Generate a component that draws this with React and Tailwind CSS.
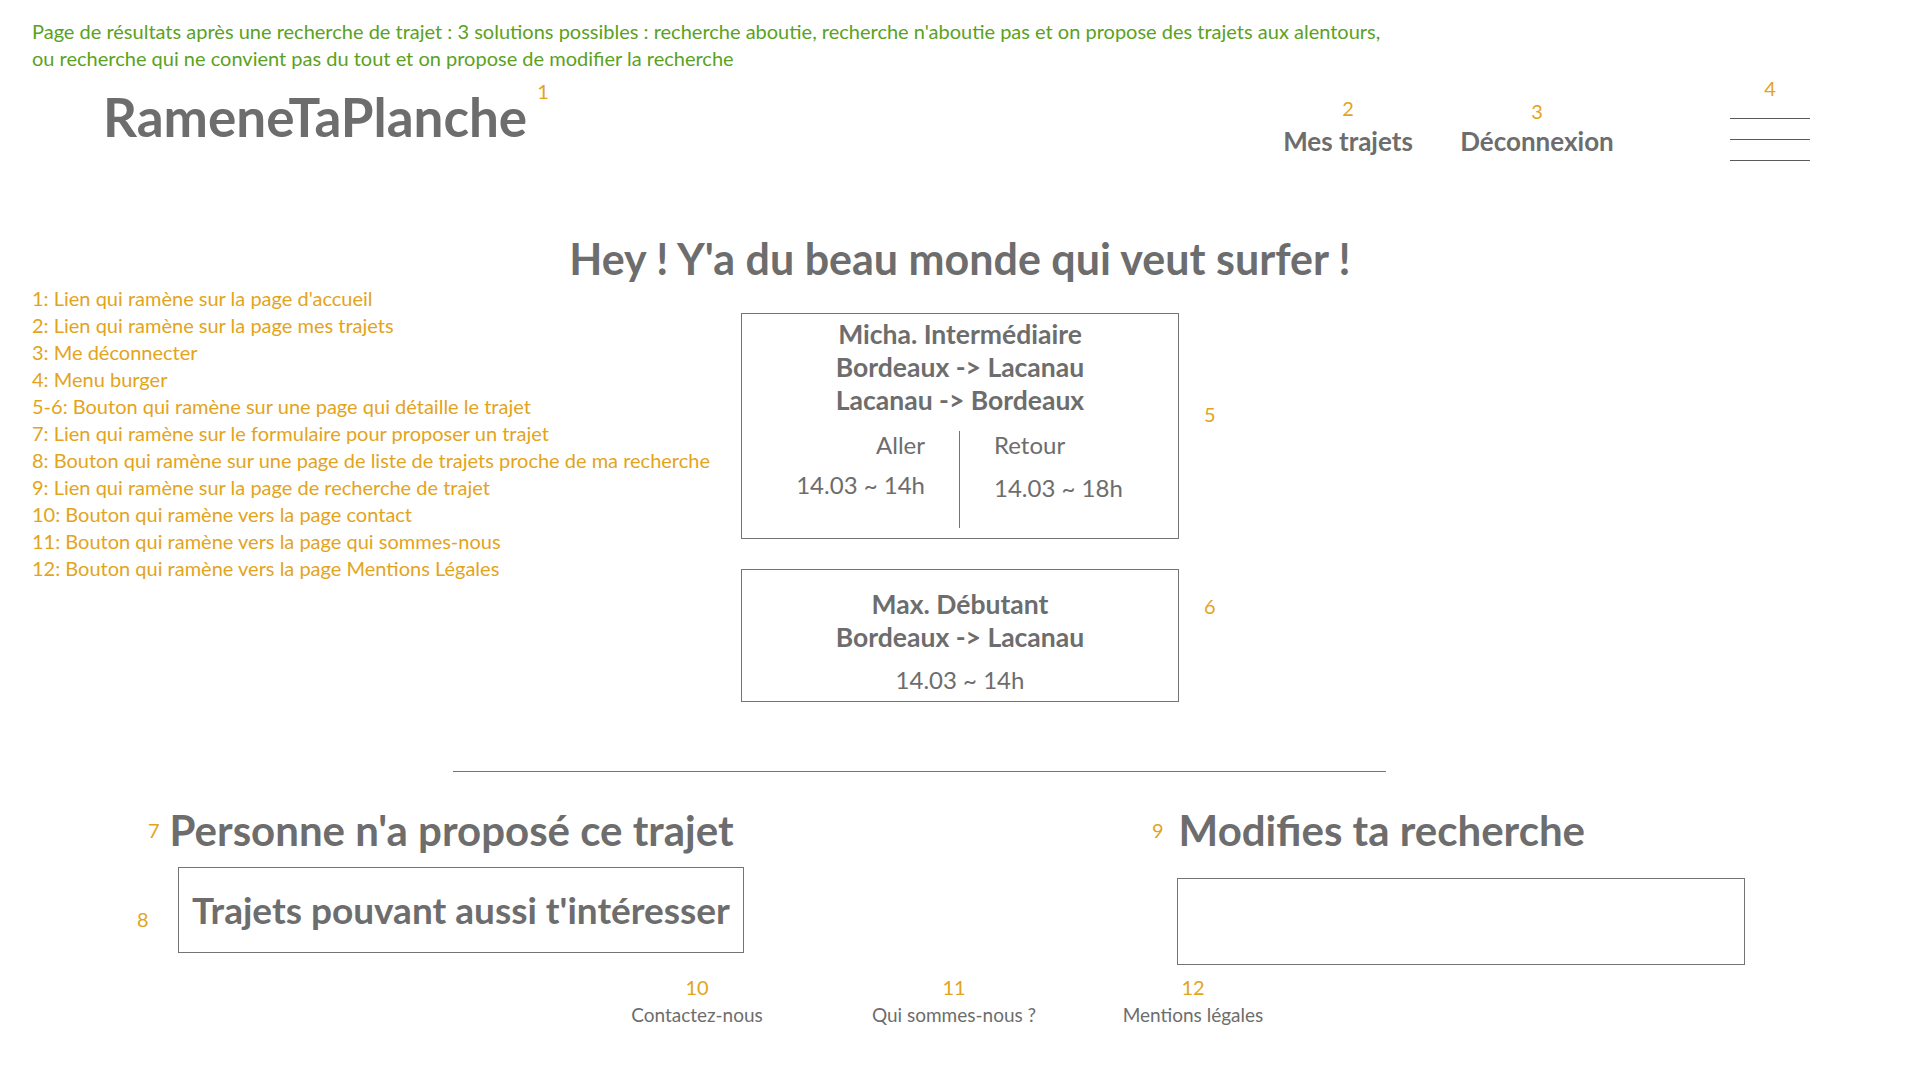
const legend = [
  "1: Lien qui ramène sur la page d'accueil",
  "2: Lien qui ramène sur la page mes trajets",
  "3: Me déconnecter",
  "4: Menu burger",
  "5-6: Bouton qui ramène sur une page qui détaille le trajet",
  "7: Lien qui ramène sur le formulaire pour proposer un trajet",
  "8: Bouton qui ramène sur une page de liste de trajets proche de ma recherche",
  "9: Lien qui ramène sur la page de recherche de trajet",
  "10: Bouton qui ramène vers la page contact",
  "11: Bouton qui ramène vers la page qui sommes-nous",
  "12: Bouton qui ramène vers la page Mentions Légales",
];

const footerLinks = [
  { num: "10", label: "Contactez-nous", cls: "ml-[597px]" },
  { num: "11", label: "Qui sommes-nous ?", cls: "ml-[57px]" },
  { num: "12", label: "Mentions légales", cls: "ml-[39px]" },
];

function Num({ children, className = "" }) {
  return <span className={`text-[#e3a41c] text-[20px] leading-none ${className}`}>{children}</span>;
}

export default function App() {
  return (
    <div className="w-[1920px] h-[1080px] bg-white overflow-hidden font-[Lato,sans-serif] text-[#6d6d6d]">
      {/* note */}
      <div className="pt-[18px] pl-[32px] text-[20px] leading-[27px] text-[#5aa21d]">
        <p>Page de résultats après une recherche de trajet : 3 solutions possibles : recherche aboutie, recherche n'aboutie pas et on propose des trajets aux alentours,</p>
        <p>ou recherche qui ne convient pas du tout et on propose de modifier la recherche</p>
      </div>

      {/* header */}
      <header className="flex items-start h-[100px]">
        <div className="ml-[103px] mt-[18px] text-[53px] leading-none font-bold">RameneTaPlanche</div>
        <Num className="ml-[10px] mt-[9px]">1</Num>
        <nav className="ml-auto flex items-start">
          <a className="w-[160px] flex flex-col items-center">
            <Num className="mt-[26px]">2</Num>
            <span className="mt-[10px] text-[26px] leading-none font-bold">Mes trajets</span>
          </a>
          <a className="ml-[19px] w-[180px] flex flex-col items-center">
            <Num className="mt-[29px]">3</Num>
            <span className="mt-[7px] text-[26px] leading-none font-bold">Déconnexion</span>
          </a>
          <button className="ml-[103px] mr-[110px] w-[80px] flex flex-col items-center">
            <Num className="mt-[6px]">4</Num>
            <span className="mt-[20px] w-[80px] h-px bg-[#5a5a5a]" />
            <span className="mt-[20px] w-[80px] h-px bg-[#5a5a5a]" />
            <span className="mt-[20px] w-[80px] h-px bg-[#5a5a5a]" />
          </button>
        </nav>
      </header>

      <h1 className="mt-[65px] text-center text-[43px] leading-none font-bold">Hey ! Y'a du beau monde qui veut surfer !</h1>

      {/* results */}
      <section className="mt-[5px] flex items-start">
        <ul className="w-[741px] pl-[32px] text-[20px] leading-[27px] text-[#e3a41c]">
          {legend.map((l) => (
            <li key={l}>{l}</li>
          ))}
        </ul>
        <div className="mt-[28px] flex flex-col">
          <div className="flex items-start">
            <div className="w-[438px] h-[226px] border border-[#747474] pt-[4px]">
              <div className="text-center text-[26.5px] leading-[33px] font-bold">
                <p>Micha. Intermédiaire</p>
                <p>Bordeaux -&gt; Lacanau</p>
                <p>Lacanau -&gt; Bordeaux</p>
              </div>
              <div className="mt-[14px] grid grid-cols-2 text-[24px] leading-[28px]">
                <div className="h-[97px] border-r border-[#747474] pr-[34px] text-right">
                  <p>Aller</p>
                  <p className="mt-[12px]">14.03 ~ 14h</p>
                </div>
                <div className="pl-[34px]">
                  <p>Retour</p>
                  <p className="mt-[15px]">14.03 ~ 18h</p>
                </div>
              </div>
            </div>
            <Num className="ml-[25px] mt-[91px]">5</Num>
          </div>
          <div className="mt-[30px] flex items-start">
            <div className="w-[438px] h-[133px] border border-[#747474] pt-[18px] text-center">
              <div className="text-[26.5px] leading-[33px] font-bold">
                <p>Max. Débutant</p>
                <p>Bordeaux -&gt; Lacanau</p>
              </div>
              <p className="mt-[12px] text-[24px] leading-[28px]">14.03 ~ 14h</p>
            </div>
            <Num className="ml-[25px] mt-[27px]">6</Num>
          </div>
        </div>
      </section>

      <hr className="mt-[69px] ml-[453px] w-[933px] border-0 border-t border-[#747474]" />

      {/* alternatives */}
      <section className="flex items-start">
        <div className="ml-[137px] flex flex-col">
          <div className="mt-[37px] pl-[11px] flex items-center">
            <Num className="text-[16px]">7</Num>
            <h2 className="ml-[10px] text-[42px] leading-none font-bold">Personne n'a proposé ce trajet</h2>
          </div>
          <div className="mt-[16px] flex items-center">
            <Num className="w-[12px] mt-[18px]">8</Num>
            <a className="ml-[29px] w-[566px] h-[86px] border border-[#747474] flex items-center justify-center text-[37px] font-bold">
              Trajets pouvant aussi t'intéresser
            </a>
          </div>
        </div>
        <div className="ml-[408px] flex flex-col">
          <div className="mt-[37px] flex items-center">
            <Num className="text-[16px]">9</Num>
            <h2 className="ml-[15px] text-[42px] leading-none font-bold">Modifies ta recherche</h2>
          </div>
          <div className="ml-[25px] mt-[27px] w-[568px] h-[87px] border border-[#747474]" />
        </div>
      </section>

      {/* footer */}
      <footer className="mt-[12px] flex items-start">
        {footerLinks.map((f) => (
          <a key={f.num} className={`${f.cls} w-[200px] flex flex-col items-center`}>
            <Num>{f.num}</Num>
            <span className="mt-[8px] text-[19px] leading-none">{f.label}</span>
          </a>
        ))}
      </footer>
    </div>
  );
}
